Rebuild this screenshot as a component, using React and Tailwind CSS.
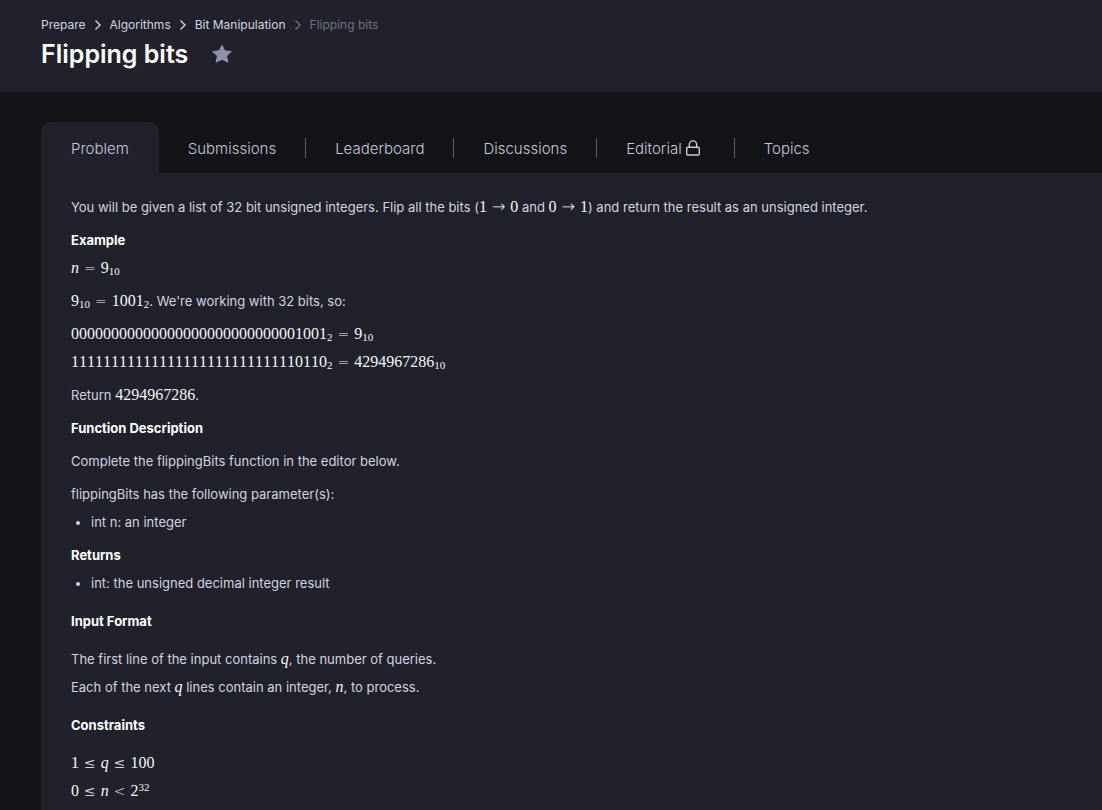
import { Fragment } from 'react';

const crumbs = ['Prepare', 'Algorithms', 'Bit Manipulation'];

const tabs = [
  { label: 'Submissions' },
  { label: 'Leaderboard' },
  { label: 'Discussions' },
  { label: 'Editorial', locked: true },
  { label: 'Topics' },
];

function Chevron() {
  return (
    <svg className="mx-2 h-3 w-2" viewBox="0 0 8 12" fill="none" stroke="currentColor" strokeWidth="1.4" aria-hidden="true">
      <path d="M1.5 1.5 6 6l-4.500 4.500" />
    </svg>
  );
}

function Star() {
  return (
    <svg className="h-5 w-5" viewBox="0 0 20 20" fill="currentColor" aria-hidden="true">
      <path
        d="M10 1.300 12.700 6.800 19.300 7.600 14.500 12 15.900 18.200 10 15.200 4.100 18.200 5.500 12 .7 7.600 7.300 6.800Z"
        stroke="currentColor"
        strokeWidth="1"
        strokeLinejoin="round"
      />
    </svg>
  );
}

function Lock() {
  return (
    <svg className="mb-1 h-4 w-3.5" viewBox="0 0 14 16" fill="none" stroke="currentColor" strokeWidth="1.4" aria-hidden="true">
      <rect x=".7" y="7.200" width="12.600" height="7.800" rx="1.200" />
      <path d="M3.300 7V4.600a3.700 3.700 0 0 1 7.400 0V7" />
    </svg>
  );
}

function M({ children }) {
  return <span className="font-['Liberation_Serif',serif] text-base leading-none text-[#f3f7f7] [font-kerning:none]">{children}</span>;
}

function Op({ children }) {
  return <span className="mx-[5px] font-['DejaVu_Sans',sans-serif] text-sm leading-none font-extralight">{children}</span>;
}

function Leq() {
  return <span className="mx-[5px] font-['DejaVu_Serif',serif] text-sm leading-none font-normal text-[#d3d4e0]">≤</span>;
}

function Arrow() {
  return <span className="mx-[5px] font-['DejaVu_Sans',sans-serif] text-base leading-none font-extralight">→</span>;
}

function Sub({ children }) {
  return <sub className="-bottom-0.5 text-[11px] leading-none">{children}</sub>;
}

function Heading({ children }) {
  return <h2 className="font-bold text-white">{children}</h2>;
}

export default function App() {
  return (
    <div className="min-h-screen bg-[#131417] font-['Inter',sans-serif] text-[#d3d4e0]">
      <header className="bg-[#21212b] px-[41px] pt-[17px] pb-[18px]">
        <nav aria-label="Breadcrumb" className="flex h-4 items-center text-xs">
          {crumbs.map((c, i) => (
            <Fragment key={c}>
              <a href="#" className="text-[#d3d4e0]">{c}</a>
              <span className={i === 2 ? 'text-[#70717d]' : ''}><Chevron /></span>
            </Fragment>
          ))}
          <span className="text-[#70717d]">Flipping bits</span>
        </nav>
        <div className="flex h-[41px] items-end gap-6">
          <h1 className="text-[25px] leading-10 font-semibold text-white">Flipping bits</h1>
          <button type="button" aria-label="Bookmark challenge" className="mb-2.5 text-[#9092ac]"><Star /></button>
        </div>
      </header>

      <main className="pt-[30px] pl-[41px]">
        <nav aria-label="Challenge sections" className="flex h-[51px] items-stretch text-[15px] font-light text-[#c8c9dd]">
          <a href="#" aria-current="page" className="flex items-center rounded-t-[10px] bg-[#21212b] px-[30px] pt-1">Problem</a>
          {tabs.map((t, i) => (
            <Fragment key={t.label}>
              {i > 0 && <span className="h-5 w-px self-center bg-[#5b5c68]" />}
              <a href="#" className={t.locked ? 'flex items-center gap-1 pt-1 pr-[34px] pl-[29px]' : 'flex items-center px-[29px] pt-1'}>
                {t.label}
                {t.locked && <Lock />}
              </a>
            </Fragment>
          ))}
        </nav>

        <article className="bg-[#21212b] px-[30px] pt-5 pb-2 text-[13px] leading-7">
          <div className="flex flex-col gap-[5px]">
            <p>
              You will be given a list of 32 bit unsigned integers. Flip all the bits (<M>1<Arrow />0</M> and{' '}
              <M>0<Arrow />1</M>) and return the result as an unsigned integer.
            </p>
            <div>
              <Heading>Example</Heading>
              <p><M><i>n</i><Op>=</Op>9<Sub>10</Sub></M></p>
            </div>
            <p><M>9<Sub>10</Sub><Op>=</Op>1001<Sub>2</Sub></M>. We're working with 32 bits, so:</p>
            <p>
              <M>00000000000000000000000000001001<Sub>2</Sub><Op>=</Op>9<Sub>10</Sub></M>
              <br />
              <M>11111111111111111111111111110110<Sub>2</Sub><Op>=</Op>4294967286<Sub>10</Sub></M>
            </p>
            <p>Return <M>4294967286</M>.</p>
            <Heading>Function Description</Heading>
            <p>Complete the flippingBits function in the editor below.</p>
            <div>
              <p>flippingBits has the following parameter(s):</p>
              <ul className="list-disc pl-5"><li>int n: an integer</li></ul>
            </div>
            <div>
              <Heading>Returns</Heading>
              <ul className="list-disc pl-5"><li>int: the unsigned decimal integer result</li></ul>
            </div>
          </div>

          <div className="mt-2.5 flex flex-col gap-2.5">
            <Heading>Input Format</Heading>
            <p>
              The first line of the input contains <M><i>q</i></M>, the number of queries.
              <br />
              Each of the next <M><i>q</i></M> lines contain an integer, <M><i>n</i></M>, to process.
            </p>
            <Heading>Constraints</Heading>
            <p>
              <M>1<Leq /><i>q</i><Leq />100</M>
              <br />
              <M>0<Leq /><i>n</i><Op>&lt;</Op>2<sup className="text-[11px] leading-none">32</sup></M>
            </p>
          </div>
        </article>
      </main>
    </div>
  );
}
